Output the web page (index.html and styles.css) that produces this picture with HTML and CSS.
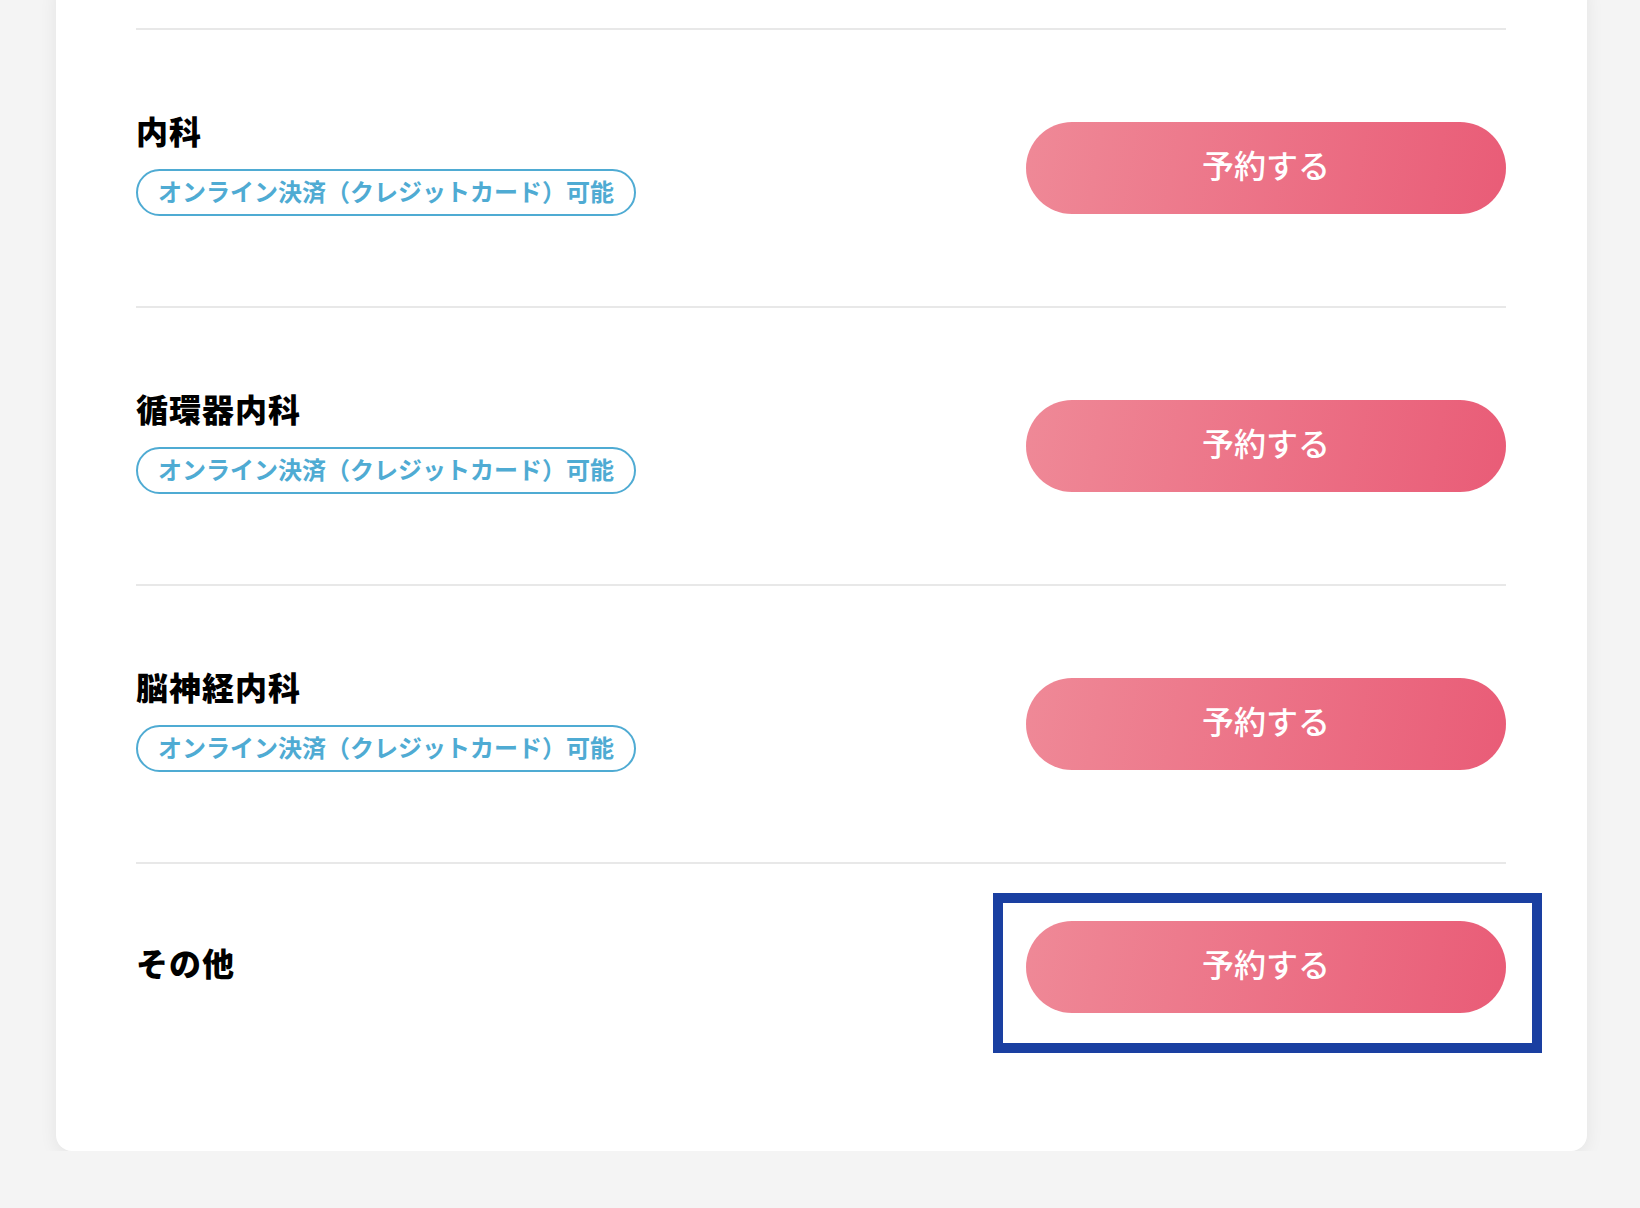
FILE: index.html
```html
<!DOCTYPE html>
<html lang="ja">
  <head>
    <meta charset="utf-8">
    <title>診療科を選択</title>
    <link rel="stylesheet" href="styles.css">
  </head>
  <body>
    <div class="card">
      <ul class="dept-list">
        <li class="dept">
          <div class="dept-info">
            <h3 class="dept-name">内科</h3>
            <span class="tag">オンライン決済（クレジットカード）可能</span>
          </div>
          <button class="reserve-btn">予約する</button>
        </li>
        <li class="dept">
          <div class="dept-info">
            <h3 class="dept-name">循環器内科</h3>
            <span class="tag">オンライン決済（クレジットカード）可能</span>
          </div>
          <button class="reserve-btn">予約する</button>
        </li>
        <li class="dept">
          <div class="dept-info">
            <h3 class="dept-name">脳神経内科</h3>
            <span class="tag">オンライン決済（クレジットカード）可能</span>
          </div>
          <button class="reserve-btn">予約する</button>
        </li>
        <li class="dept dept-plain">
          <div class="dept-info">
            <h3 class="dept-name">その他</h3>
          </div>
          <div class="focus-wrap">
            <button class="reserve-btn">予約する</button>
            <span class="focus-ring"></span>
          </div>
        </li>
      </ul>
    </div>
  </body>
</html>
```

FILE: styles.css
```css
body {
  margin: 0;
  background: #f4f4f4;
  font-family: "Noto Sans CJK JP", "Noto Sans", sans-serif;
  color: #000;
}

.card {
  width: 1531px;
  box-sizing: border-box;
  margin: -20px 0 0 56px;
  padding: 48px 81px 81px 80px;
  background: #fff;
  border-radius: 16px;
  box-shadow: 0 4px 18px rgba(0, 0, 0, 0.07);
}

.dept-list { list-style: none; margin: 0; padding: 0; }

.dept {
  display: flex;
  align-items: center;
  justify-content: space-between;
  padding: 89px 0 90px;
  border-top: 2px solid #e8e8e8;
}
.dept-plain { padding: 57px 0; }

.dept-info { display: flex; flex-direction: column; align-items: flex-start; }

/* line box kept short so the glyphs sit a little higher */
.dept-name {
  margin: 0;
  padding-bottom: 10px;
  font-size: 32px;
  font-weight: 900;
  line-height: 22px;
  letter-spacing: 1px;
}
.dept-name + .tag { margin-top: 18px; }

.tag {
  display: inline-block;
  padding: 5px 20px 9px;
  border: 2px solid #4fabd3;
  border-radius: 30px;
  color: #4fabd3;
  font-size: 24px;
  font-weight: 700;
  line-height: 29px;
}

.reserve-btn {
  display: block;
  box-sizing: border-box;
  width: 480px;
  height: 92px;
  padding: 0 0 8px;
  border: none;
  border-radius: 46px;
  background: linear-gradient(100deg, #ef8997 0%, #e95c77 100%);
  color: #fff;
  font-family: inherit;
  font-size: 32px;
  font-weight: 500;
  cursor: pointer;
}

.focus-wrap { position: relative; }
.focus-ring {
  position: absolute;
  top: -28px;
  left: -33px;
  right: -36px;
  bottom: -40px;
  border: 10px solid #1a3fa1;
  pointer-events: none;
}
```
